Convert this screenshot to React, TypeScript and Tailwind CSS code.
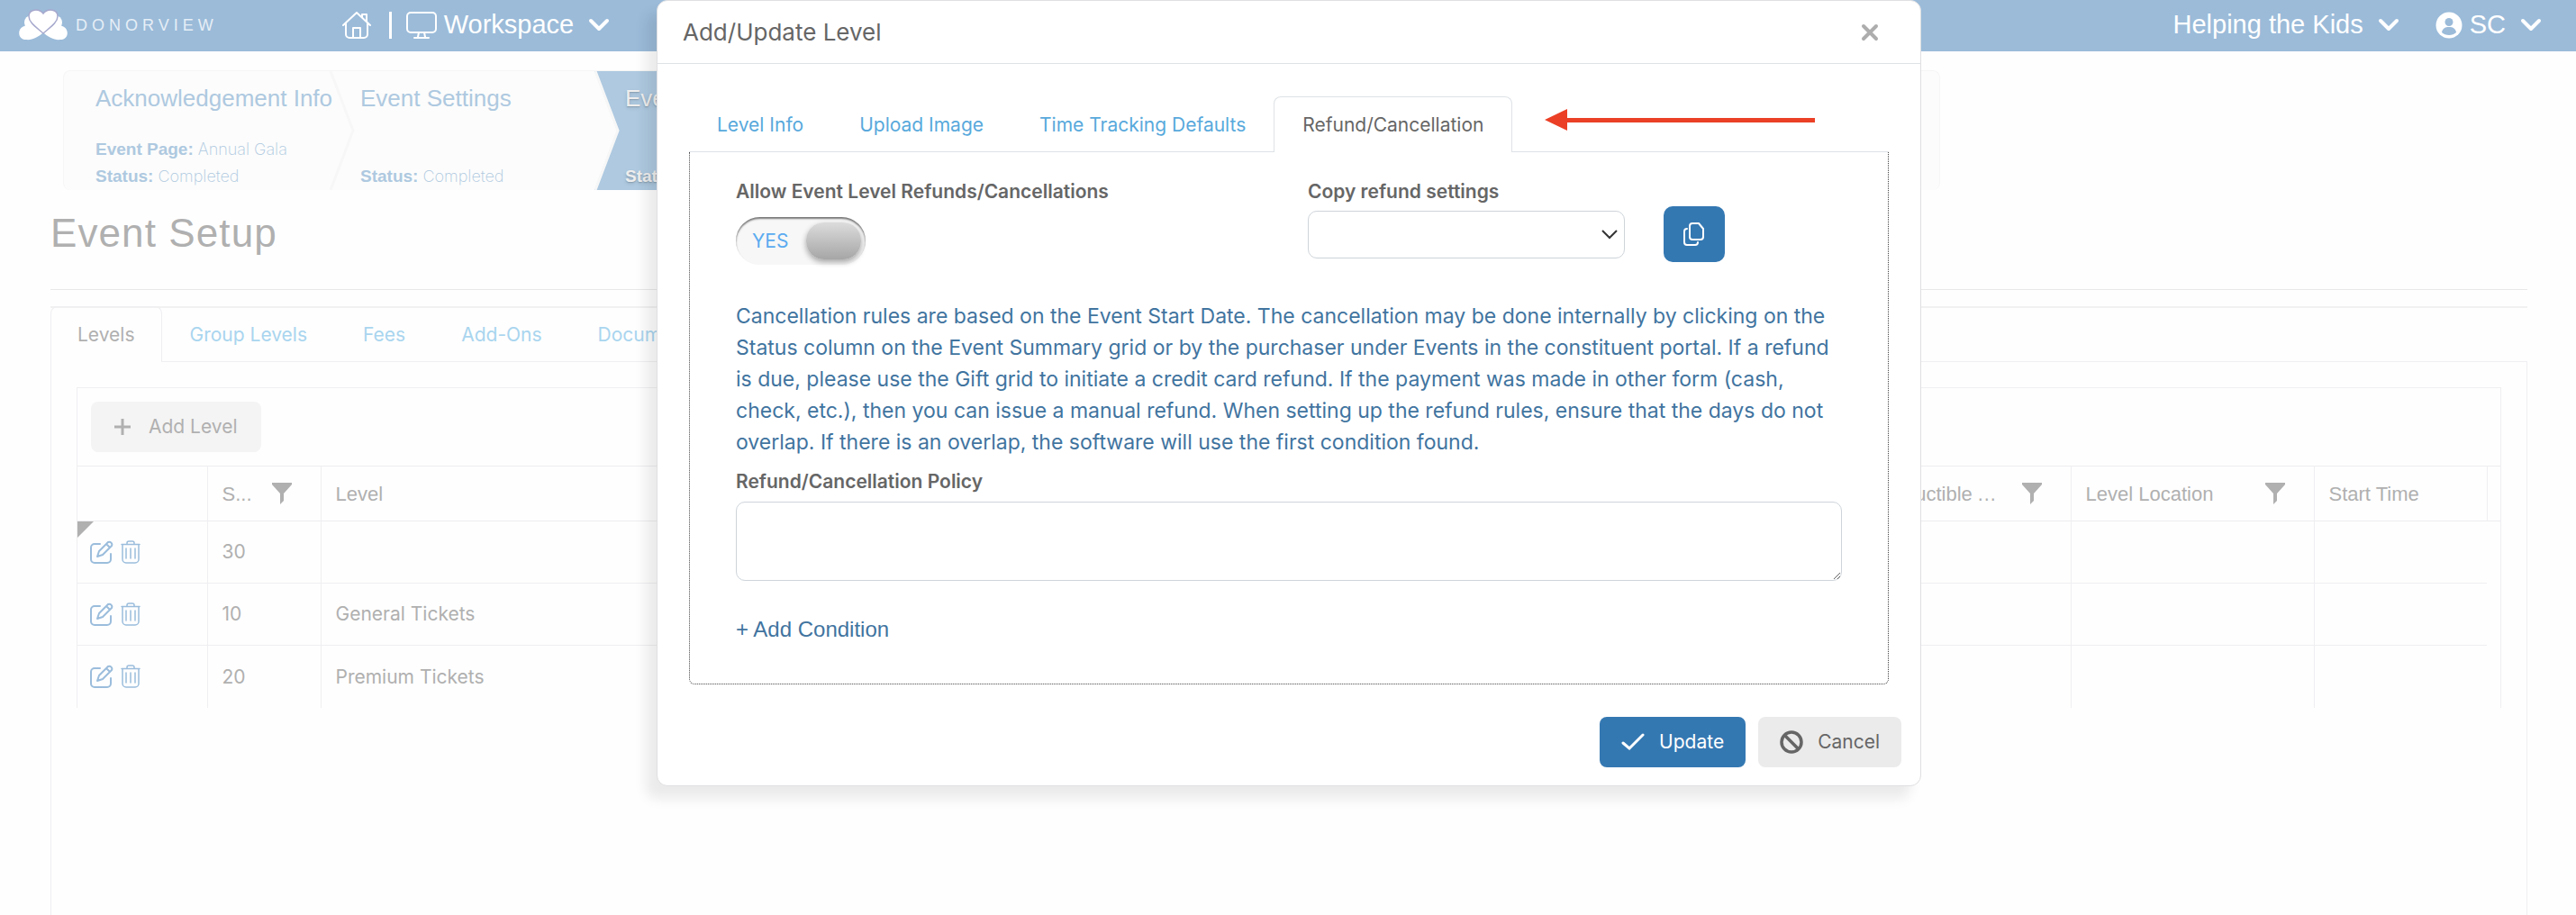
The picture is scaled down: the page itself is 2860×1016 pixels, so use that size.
import { useState } from 'react';

const steps = [
  { title: 'Acknowledgement Info', page: 'Annual Gala', status: 'Completed' },
  { title: 'Event Settings', status: 'Completed' },
  { title: 'Event Setup', status: 'Completed', active: true },
];

const pageTabs = ['Levels', 'Group Levels', 'Fees', 'Add-Ons', 'Documents'];
const modalTabs = ['Level Info', 'Upload Image', 'Time Tracking Defaults', 'Refund/Cancellation'];

const rows = [
  { sort: 30, level: '', dirty: true },
  { sort: 10, level: 'General Tickets' },
  { sort: 20, level: 'Premium Tickets' },
];

function Logo() {
  return (
    <svg viewBox="0 0 56 36" className="h-9 w-14" fill="#fff" aria-hidden="true">
      <circle cx="15" cy="15" r="8" />
      <circle cx="41" cy="15" r="8" />
      <path d="M28 26C23 31 15 35 9 34-1 34-1 21 7 19c3-2 7-2 10-3Z" />
      <path d="M28 26c5 5 13 9 19 8 10 0 10-13 2-15-3-2-7-2-10-3Z" />
      <path
        d="M28 27C20 20 12 15 12 8c0-8 11-9 16-3 5-6 16-5 16 3 0 7-8 12-16 19Z"
        stroke="#a7a9cd"
        strokeWidth="1.500"
      />
    </svg>
  );
}

function HomeIcon() {
  return (
    <svg viewBox="0 0 32 30" className="h-[30px] w-8" fill="none" stroke="#fff" strokeWidth="2" strokeLinejoin="round" strokeLinecap="round" aria-hidden="true">
      <path d="M1 15 16 1l15 14M4 13v12a4 4 0 0 0 4 4h16a4 4 0 0 0 4-4V13M22 6V3h5v8M12 29V18h8v11" />
    </svg>
  );
}

function MonitorIcon() {
  return (
    <svg viewBox="0 0 34 30" className="h-[30px] w-[34px]" fill="none" stroke="#fff" strokeWidth="2" strokeLinecap="round" aria-hidden="true">
      <rect x="1" y="1" width="32" height="22" rx="4" />
      <path d="M14 23l-1 5M20 23l1 5M9 29h16" />
    </svg>
  );
}

function Chevron() {
  return (
    <svg viewBox="0 0 24 16" className="h-4 w-6" fill="none" stroke="#fff" strokeWidth="4" strokeLinecap="round" strokeLinejoin="round" aria-hidden="true">
      <path d="M3 3l9 9 9-9" />
    </svg>
  );
}

function UserIcon() {
  return (
    <svg viewBox="0 0 30 30" className="h-[30px] w-[30px]" aria-hidden="true">
      <circle cx="15" cy="15" r="14.500" fill="#fff" />
      <circle cx="15" cy="11.500" r="4.500" fill="#9bbbd9" />
      <path d="M7 23c1-5 4-6 8-6s7 1 8 6c-4 4-12 4-16 0Z" fill="#9bbbd9" />
    </svg>
  );
}

function FilterIcon() {
  return (
    <svg viewBox="0 0 22 24" className="h-6 w-[22px] shrink-0" fill="#b0b0b0" aria-hidden="true">
      <path d="M0 0h22v2l-9 10v8l-4 4V12L0 2Z" />
    </svg>
  );
}

function EditIcon() {
  return (
    <svg viewBox="0 0 26 26" className="h-[26px] w-[26px]" fill="none" stroke="#9bbddc" strokeWidth="2" strokeLinejoin="round" strokeLinecap="round" aria-hidden="true">
      <path d="M11 4H5a4 4 0 0 0-4 4v13a4 4 0 0 0 4 4h14a4 4 0 0 0 4-4v-6" />
      <path d="M8 18l2-6L20 2a3 3 0 0 1 4 4L14 16ZM18 4l4 4" />
    </svg>
  );
}

function TrashIcon() {
  return (
    <svg viewBox="0 0 22 26" className="h-[26px] w-[22px]" fill="none" stroke="#9bbddc" strokeWidth="1.500" strokeLinecap="round" aria-hidden="true">
      <path d="M1 4.500h20M7 4V3a2 2 0 0 1 2-2h4a2 2 0 0 1 2 2v1M2 5v16a4 4 0 0 0 4 4h10a4 4 0 0 0 4-4V5M6 9v11M11 9v11M16 9v11" />
    </svg>
  );
}

function PlusIcon() {
  return (
    <svg viewBox="0 0 18 18" className="h-[18px] w-[18px]" stroke="currentColor" strokeWidth="3" aria-hidden="true">
      <path d="M9 0v18M0 9h18" />
    </svg>
  );
}

function CheckIcon() {
  return (
    <svg viewBox="0 0 26 20" className="h-5 w-[26px]" fill="none" stroke="#fff" strokeWidth="3" strokeLinecap="round" aria-hidden="true">
      <path d="M2 11l7 6L24 2" />
    </svg>
  );
}

function CopyIcon() {
  return (
    <svg viewBox="0 0 24 28" className="h-7 w-6" fill="none" stroke="#fff" strokeWidth="2" strokeLinejoin="round" strokeLinecap="round" aria-hidden="true">
      <path d="M10 2h7l5 6v9a3 3 0 0 1-3 3h-9a3 3 0 0 1-3-3V5a3 3 0 0 1 3-3Z" />
      <path d="M4 8a3 3 0 0 0-3 3v12a3 3 0 0 0 3 3h9a3 3 0 0 0 3-3" />
    </svg>
  );
}

function BanIcon() {
  return (
    <svg viewBox="0 0 26 26" className="h-[26px] w-[26px]" fill="none" stroke="#666" strokeWidth="3.500" aria-hidden="true">
      <circle cx="13" cy="13" r="11" />
      <path d="M5 5l16 16" />
    </svg>
  );
}

function Header() {
  return (
    <header className="flex h-[57px] items-center justify-between bg-[#9bbbd9] pr-[38px] pb-0.5 pl-5 text-[29px] text-white">
      <div className="flex items-center">
        <a href="#home" className="flex items-center gap-2">
          <Logo />
          <span className="text-lg tracking-[5px] text-[#e6eef6]">DONORVIEW</span>
        </a>
        <a href="#dashboard" aria-label="Home" className="ml-[138px]"><HomeIcon /></a>
        <span className="mx-5 h-[30px] w-[3px] bg-white" />
        <button type="button" className="-ml-1 flex items-center gap-2">
          <MonitorIcon />
          <span className="leading-none">Workspace</span>
          <span className="ml-2"><Chevron /></span>
        </button>
      </div>
      <div className="flex items-center gap-10">
        <button type="button" className="flex items-center gap-4 leading-none">
          Helping the Kids
          <Chevron />
        </button>
        <button type="button" className="flex items-center gap-2 leading-none">
          <UserIcon />
          SC
          <span className="ml-2"><Chevron /></span>
        </button>
      </div>
    </header>
  );
}

function StepArrow({ active }: { active: boolean }) {
  return (
    <svg viewBox="0 0 28 132" className="absolute top-0 left-[-34px] h-full w-7" preserveAspectRatio="none" aria-hidden="true">
      {active && <path d="M0 0h28v132H0l25-66Z" fill="#aec9e0" />}
      <path d="M1 0l25 66L1 132" fill="none" stroke="#f7f7f7" strokeWidth="3" />
    </svg>
  );
}

function Steps() {
  return (
    <ol className="mt-[21px] mr-[706px] ml-[70px] flex h-[133px] overflow-hidden rounded-lg border border-b-0 border-[#f6f6f6] bg-[#fcfcfc] pl-[35px]">
      {steps.map((step, i) => (
        <li
          key={step.title}
          className={`relative flex w-[294px] shrink-0 flex-col justify-between pt-3.5 ${step.active ? 'text-[#eee] text-shadow-md' : 'text-[#aec9e0]'}`}
        >
          {step.active && <span className="absolute inset-y-0 right-0 left-[-7px] bg-[#aec9e0]" />}
          {i > 0 && <StepArrow active={!!step.active} />}
          <h2 className="relative text-[26px] leading-8 whitespace-nowrap">{step.title}</h2>
          <div className="relative font-[Inter] text-lg leading-[30px] font-extralight">
            {step.page && (
              <p><b className="font-[Liberation_Sans] text-[19px] font-bold">Event Page:</b> {step.page}</p>
            )}
            <p><b className="font-[Liberation_Sans] text-[19px] font-bold">Status:</b> {step.status}</p>
          </div>
        </li>
      ))}
    </ol>
  );
}

function LevelsGrid() {
  return (
    <table className="w-full table-fixed border-collapse text-left text-[#b0b0b0]">
      <colgroup>
        <col className="w-36" />
        <col className="w-[126px]" />
        <col />
        <col className="w-[270px]" />
        <col className="w-[270px]" />
        <col className="w-[192px]" />
        <col className="w-[15px]" />
      </colgroup>
      <thead className="border-y border-[#ededf0] font-[Liberation_Sans] text-[22px]">
        <tr className="h-[61px]">
          <th aria-label="Actions" className="border-r border-[#efeff2]" />
          <th className="border-r border-[#efeff2] px-4 font-normal">
            <span className="flex items-center justify-between pr-4">S... <FilterIcon /></span>
          </th>
          <th className="border-r border-[#efeff2] px-4 font-normal">Level</th>
          <th className="border-r border-[#efeff2] px-4 font-normal">
            <span className="flex items-center justify-between pr-4">
              <span className="w-[174px] truncate">Tax Deductible Amount</span>
              <FilterIcon />
            </span>
          </th>
          <th className="border-r border-[#efeff2] px-4 font-normal">
            <span className="flex items-center justify-between pr-4">Level Location <FilterIcon /></span>
          </th>
          <th className="border-r border-[#efeff2] px-4 font-normal">Start Time</th>
          <th />
        </tr>
      </thead>
      <tbody className="font-[Inter] text-[21px]">
        {rows.map((row) => (
          <tr key={row.sort} className="group h-[69px]">
            <td className="relative border-r border-b border-[#efeff2] pl-3.5 group-last:border-b-0">
              {row.dirty && (
                <span className="absolute top-0 left-0 h-[18px] w-[18px] bg-[#b0b0b0] [clip-path:polygon(0_0,100%_0,0_100%)]" />
              )}
              <span className="flex items-center gap-2">
                <button type="button" aria-label="Edit"><EditIcon /></button>
                <button type="button" aria-label="Delete"><TrashIcon /></button>
              </span>
            </td>
            <td className="border-r border-b border-[#efeff2] px-4 group-last:border-b-0">{row.sort}</td>
            <td className="border-r border-b border-[#efeff2] px-4 group-last:border-b-0">{row.level}</td>
            <td className="border-r border-b border-[#efeff2] group-last:border-b-0" />
            <td className="border-r border-b border-[#efeff2] group-last:border-b-0" />
            <td className="border-b border-[#efeff2] group-last:border-b-0" />
            <td />
          </tr>
        ))}
      </tbody>
    </table>
  );
}

function EventSetup() {
  return (
    <main className="mt-[22px] mr-[54px] ml-14 flex grow flex-col">
      <h1 className="text-[44px] leading-[52px] tracking-wide text-[#b0b0b0]">Event Setup</h1>
      <hr className="mt-9 mb-[18px] border-[#e8e8e8]" />
      <nav className="flex h-[62px] border-t-2 border-[#f1f1f1] font-[Inter] text-[21px]">
        {pageTabs.map((tab, i) =>
          i === 0 ? (
            <a key={tab} href="#levels" className="-mt-0.5 flex items-center rounded-t-lg border border-b-0 border-[#efeff2] px-[29px] text-[#b0b0b0]">
              {tab}
            </a>
          ) : (
            <a key={tab} href={`#${tab}`} className="flex items-center border-b border-[#efeff2] px-[31px] text-[#a9d5ef]">{tab}</a>
          ),
        )}
        <span className="grow border-b border-[#efeff2]" />
      </nav>
      <section className="grow border-x border-[#efeff2] px-7 pt-7">
        <div className="h-full border border-b-0 border-[#efeff2]">
          <div className="px-[15px] py-[15px]">
            <button type="button" className="flex h-14 items-center gap-5 rounded-lg bg-[#f4f4f4] px-[26px] font-[Inter] text-[21px] text-[#b0b0b0]">
              <PlusIcon />
              Add Level
            </button>
          </div>
          <LevelsGrid />
        </div>
      </section>
    </main>
  );
}

function Toggle({ id }: { id: string }) {
  const [on, setOn] = useState(true);
  return (
    <span className="relative flex h-[53px] w-36 items-center rounded-full bg-[#f7f7f7] pl-[18px] text-[21px] text-[#5aabf0] shadow-[inset_0_2px_2px_#777]">
      <input id={id} type="checkbox" checked={on} onChange={() => setOn(!on)} className="absolute inset-0 z-10 h-full w-full cursor-pointer opacity-0" />
      {on ? 'YES' : 'NO'}
      <span className="absolute top-1.5 right-[5px] h-[41px] w-[61px] rounded-[20px] bg-linear-to-b from-[#dcdcdc] to-[#a6a6a6] shadow-[0_3px_6px_#0005]" />
    </span>
  );
}

function LevelModal() {
  return (
    <div
      role="dialog"
      aria-labelledby="level-title"
      className="absolute top-0 right-[727px] left-[729px] rounded-xl border border-[#dfdfe2] bg-white font-[Inter] text-[#666] shadow-[-12px_14px_14px_rgba(0,0,0,0.08)]"
    >
      <div className="flex h-[70px] items-center justify-between border-b border-[#dee2e6] pr-[46px] pl-7">
        <h2 id="level-title" className="text-[26px]">Add/Update Level</h2>
        <button type="button" aria-label="Close">
          <svg viewBox="0 0 20 20" className="h-5 w-5" stroke="#adadad" strokeWidth="4" strokeLinecap="round">
            <path d="M3 3l14 14M17 3L3 17" />
          </svg>
        </button>
      </div>

      <div className="px-[35px] pt-9">
        <div className="flex h-[62px] text-[21px]">
          {modalTabs.map((tab, i) =>
            i === modalTabs.length - 1 ? (
              <button key={tab} type="button" className="rounded-t-lg border border-b-0 border-[#dee2e6] px-[31px]">{tab}</button>
            ) : (
              <button key={tab} type="button" className="border-b border-[#dee2e6] px-[31px] pt-0.5 text-[#58a9dc]">{tab}</button>
            ),
          )}
          <div className="flex grow border-b border-[#dee2e6] pt-3.5 pl-9">
            <svg viewBox="0 0 300 24" className="h-6 w-[300px]" fill="#eb4026" aria-hidden="true">
              <path d="M0 12L25 0v10h275v5H25v9Z" />
            </svg>
          </div>
        </div>

        <div className="rounded-b-md border border-t-0 border-dotted border-[#444] px-[51px] pt-7 pb-11">
          <div className="flex">
            <div className="w-[635px]">
              <label htmlFor="allow" className="block text-[21px] leading-8 font-semibold">Allow Event Level Refunds/Cancellations</label>
              <div className="mt-3"><Toggle id="allow" /></div>
            </div>
            <div>
              <label htmlFor="copy" className="block text-[21px] leading-8 font-semibold">Copy refund settings</label>
              <div className="mt-1 flex items-center gap-[43px]">
                <div className="relative">
                  <select id="copy" className="h-[53px] w-[352px] appearance-none rounded-[10px] border border-[#ced4da] bg-white">
                    <option value="" />
                  </select>
                  <svg viewBox="0 0 18 11" className="pointer-events-none absolute top-[21px] right-2 h-[11px] w-[18px]" fill="none" stroke="#333" strokeWidth="2">
                    <path d="M1 1l8 8 8-8" />
                  </svg>
                </div>
                <button type="button" aria-label="Copy settings" className="-my-1 flex h-[62px] w-[68px] items-center justify-center rounded-[10px] bg-[#3478b2]">
                  <CopyIcon />
                </button>
              </div>
            </div>
          </div>

          <p className="mt-10 text-[23px] leading-[35px] text-[#41749f]">
            Cancellation rules are based on the Event Start Date. The cancellation may be done internally by clicking on the
            Status column on the Event Summary grid or by the purchaser under Events in the constituent portal. If a refund
            is due, please use the Gift grid to initiate a credit card refund. If the payment was made in other form (cash,
            check, etc.), then you can issue a manual refund. When setting up the refund rules, ensure that the days do not
            overlap. If there is an overlap, the software will use the first condition found.
          </p>

          <label htmlFor="policy" className="mt-2.5 block text-[21px] leading-8 font-semibold">Refund/Cancellation Policy</label>
          <textarea id="policy" className="mt-1.5 block h-[88px] w-full rounded-[10px] border border-[#ced4da]" />

          <button type="button" className="mt-[38px] block font-[Liberation_Sans] text-2xl text-[#41749f]">+ Add Condition</button>
        </div>
      </div>

      <div className="flex justify-end gap-3.5 px-[21px] pt-9 pb-5 text-[21px]">
        <button type="button" className="flex h-14 items-center gap-4 rounded-lg bg-[#3478b2] px-6 text-white">
          <CheckIcon />
          Update
        </button>
        <button type="button" className="flex h-14 items-center gap-4 rounded-lg bg-[#ebebeb] px-6">
          <BanIcon />
          Cancel
        </button>
      </div>
    </div>
  );
}

export default function App() {
  return (
    <div className="relative flex min-h-screen flex-col overflow-hidden bg-[#fefefe] font-['Liberation_Sans',Arial,sans-serif]">
      <Header />
      <Steps />
      <EventSetup />
      <LevelModal />
    </div>
  );
}
